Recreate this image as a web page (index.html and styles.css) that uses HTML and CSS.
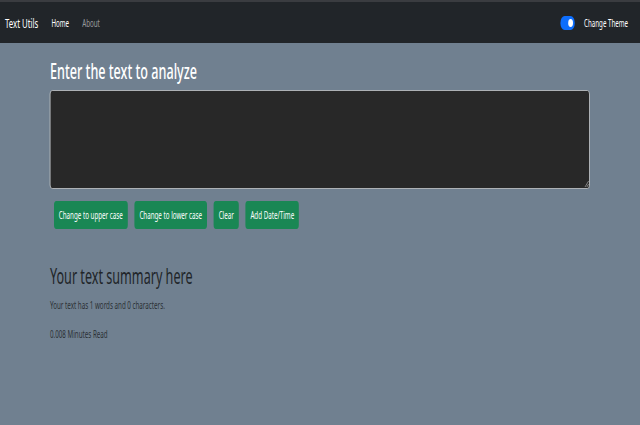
FILE: index.html
```html
<!DOCTYPE html>
<html>
<head>
<meta charset="utf-8">
<link rel="stylesheet" href="styles.css">
</head>
<body>
<div class="frame">
<div class="page">
<nav class="navbar">
  <div class="nav-left">
    <span class="brand">Text Utils</span>
    <span class="nav-link active">Home</span>
    <span class="nav-link">About</span>
  </div>
  <div class="nav-right">
    <span class="switch"><span class="knob"></span></span>
    <span class="switch-label">Change Theme</span>
  </div>
</nav>
<main class="container">
  <h1 class="title">Enter the text to analyze</h1>
  <div class="textbox">
    <svg class="grip" width="10" height="10" viewBox="0 0 10 10"><path d="M9 3 L3 9 M9 6 L6 9" stroke="#9a9a9a" stroke-width="1"/></svg>
  </div>
  <div class="buttons">
    <button class="btn">Change to upper case</button>
    <button class="btn">Change to lower case</button>
    <button class="btn">Clear</button>
    <button class="btn">Add Date/Time</button>
  </div>
  <h2 class="summary">Your text summary here</h2>
  <p class="info">Your text has 1 words and 0 characters.</p>
  <p class="info read">0.008 Minutes Read</p>
</main>
</div>
</div>
</body>
</html>
```
FILE: styles.css
```css
* { box-sizing: border-box; }
html, body { margin: 0; padding: 0; overflow: hidden; }
body {
  background: #708090;
  font-family: "Noto Sans", "DejaVu Sans", sans-serif;
}
.frame {
  width: 640px;
  height: 425px;
  overflow: hidden;
}
.page {
  width: 1066.67px;
  transform: scaleX(0.6);
  transform-origin: 0 0;
}
.navbar {
  height: 43px;
  background: #212529;
  border-top: 2px solid #3a3c40;
  display: flex;
  align-items: center;
  justify-content: space-between;
  padding: 0 20px 0 8.3px;
}
.nav-left { display: flex; align-items: center; }
.brand { color: #fff; font-size: 13px; margin-right: 22px; }
.nav-link { color: rgba(255,255,255,0.55); font-size: 10.3px; margin-right: 22px; }
.nav-link.active { color: #fff; }
.nav-right { display: flex; align-items: center; }
.switch {
  width: 24px; height: 14px;
  background: #0d6efd;
  border-radius: 7px;
  position: relative;
  margin-right: 15px;
}
.knob {
  position: absolute;
  right: 3px; top: 3px;
  width: 8px; height: 8px;
  background: #fff;
  border-radius: 50%;
}
.switch-label { color: #fff; font-size: 10.3px; }
.container { padding: 0 83.3px; }
.title {
  color: #fff;
  font-size: 21px;
  font-weight: 500;
  margin: 16px 0 7px;
  line-height: 24px;
}
.textbox {
  height: 99px;
  background: #282828;
  border: 1px solid #c6c9cc;
  border-radius: 4px;
  position: relative;
}
.grip { position: absolute; right: 0; bottom: 0; }
.buttons { display: flex; gap: 11.7px; margin: 12px 0 0 6.7px; }
.btn {
  font-family: inherit;
  background: #198754;
  color: #fff;
  border: none;
  border-radius: 4px;
  font-size: 10.4px;
  height: 28px;
  padding: 0 8px;
}
.summary {
  color: #212529;
  font-size: 21px;
  font-weight: 400;
  margin: 35px 0 0;
  line-height: 24px;
}
.info { color: #2b3035; font-size: 10.4px; margin: 11px 0 0; line-height: 12px; }
.info.read { margin-top: 17px; }
```
